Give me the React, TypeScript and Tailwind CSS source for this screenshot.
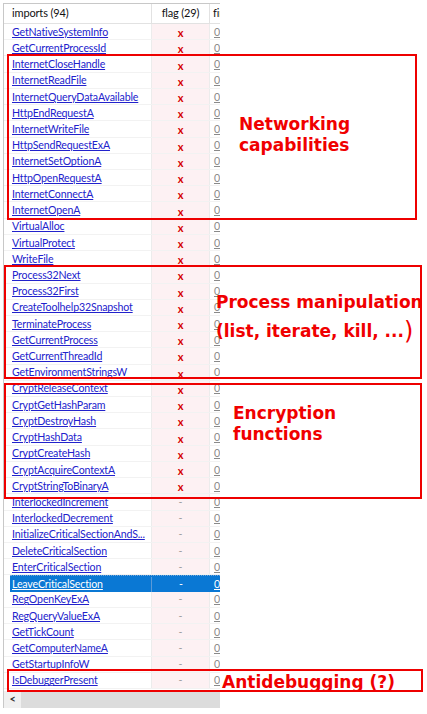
import React from "react";

type Row = { name: string; flag: boolean };

const rows: Row[] = [
  { name: "GetNativeSystemInfo", flag: true },
  { name: "GetCurrentProcessId", flag: true },
  { name: "InternetCloseHandle", flag: true },
  { name: "InternetReadFile", flag: true },
  { name: "InternetQueryDataAvailable", flag: true },
  { name: "HttpEndRequestA", flag: true },
  { name: "InternetWriteFile", flag: true },
  { name: "HttpSendRequestExA", flag: true },
  { name: "InternetSetOptionA", flag: true },
  { name: "HttpOpenRequestA", flag: true },
  { name: "InternetConnectA", flag: true },
  { name: "InternetOpenA", flag: true },
  { name: "VirtualAlloc", flag: true },
  { name: "VirtualProtect", flag: true },
  { name: "WriteFile", flag: true },
  { name: "Process32Next", flag: true },
  { name: "Process32First", flag: true },
  { name: "CreateToolhelp32Snapshot", flag: true },
  { name: "TerminateProcess", flag: true },
  { name: "GetCurrentProcess", flag: true },
  { name: "GetCurrentThreadId", flag: true },
  { name: "GetEnvironmentStringsW", flag: true },
  { name: "CryptReleaseContext", flag: true },
  { name: "CryptGetHashParam", flag: true },
  { name: "CryptDestroyHash", flag: true },
  { name: "CryptHashData", flag: true },
  { name: "CryptCreateHash", flag: true },
  { name: "CryptAcquireContextA", flag: true },
  { name: "CryptStringToBinaryA", flag: true },
  { name: "InterlockedIncrement", flag: false },
  { name: "InterlockedDecrement", flag: false },
  { name: "InitializeCriticalSectionAndS...", flag: false },
  { name: "DeleteCriticalSection", flag: false },
  { name: "EnterCriticalSection", flag: false },
  { name: "LeaveCriticalSection", flag: false },
  { name: "RegOpenKeyExA", flag: false },
  { name: "RegQueryValueExA", flag: false },
  { name: "GetTickCount", flag: false },
  { name: "GetComputerNameA", flag: false },
  { name: "GetStartupInfoW", flag: false },
  { name: "IsDebuggerPresent", flag: false },
];

const SELECTED = 34;

function ImportRow({ row, selected }: { row: Row; selected: boolean }) {
  if (selected) {
    return (
      <div className="flex h-[16.22px] items-center">
        <div className="w-[6px] h-full shrink-0" />
        <div className="flex h-full min-w-0 flex-1 items-center pt-[1px] bg-[#0a78d4] border-t border-dotted border-[#7aa8d8]">
          <div className="w-[142px] shrink-0 pl-[2px] whitespace-nowrap overflow-hidden text-white underline border-r border-[#5b9ad8]">
            {row.name}
          </div>
          <div className="w-[58px] shrink-0 text-center text-white">-</div>
          <div className="min-w-0 flex-1 overflow-hidden whitespace-nowrap pl-[4px] text-white underline">0x0000</div>
        </div>
      </div>
    );
  }
  return (
    <div className="flex h-[16.22px] items-center border-b border-[#f2f2f2]">
      <div className="w-[148px] shrink-0 h-full flex items-center pt-[2px] pl-[8px] whitespace-nowrap overflow-hidden text-[#2222cc] underline border-r border-[#ececec]">
        {row.name}
      </div>
      <div className="w-[58px] shrink-0 h-full flex items-center justify-center pt-[2px] bg-[#fdf1f3] border-r border-[#ececec]">
        {row.flag ? (
          <span className="text-[#d40000] font-bold text-[11px] leading-none">x</span>
        ) : (
          <span className="text-[#a0a0a0]">-</span>
        )}
      </div>
      <div className="min-w-0 flex-1 overflow-hidden whitespace-nowrap pt-[2px] pl-[4px] text-[#8a8a8a] underline">0x0000</div>
    </div>
  );
}

function Note({ className, children }: { className: string; children: React.ReactNode }) {
  return (
    <div
      className={`absolute text-[#f00000] font-bold text-[17px] tracking-normal whitespace-nowrap font-['DejaVu_Sans',sans-serif] ${className}`}
    >
      {children}
    </div>
  );
}

export default function App() {
  return (
    <div className="relative w-[427px] h-[714px] bg-white overflow-hidden font-['Lato','Liberation_Sans',sans-serif] text-[10.6px] tracking-[-0.15px]">
      <div className="ml-[3px] mt-[3px] w-[217px] overflow-hidden border-l border-t border-[#c8c8c8]">
        {/* header */}
        <div className="flex h-[20px] items-center border-b border-[#e2e2e2] text-[#111] text-[11px]">
          <div className="w-[148px] shrink-0 h-full flex items-center pl-[8px] border-r border-[#e2e2e2]">imports (94)</div>
          <div className="w-[58px] shrink-0 h-full flex items-center justify-center border-r border-[#e2e2e2]">flag (29)</div>
          <div className="min-w-0 flex-1 overflow-hidden whitespace-nowrap pl-[3px]">first-thunk</div>
        </div>
        {rows.map((r, i) => (
          <ImportRow key={r.name} row={r} selected={i === SELECTED} />
        ))}
        {/* horizontal scrollbar */}
        <div className="mt-[2px] flex h-[17px] items-center bg-[#e9e9e9]">
          <div className="w-[17px] shrink-0 h-full flex items-center justify-center bg-[#f0f0f0] text-[#333] text-[11px] font-bold">
            &lt;
          </div>
          <div className="flex-1 h-full bg-[#dcdcdc]" />
        </div>
      </div>

      {/* annotation boxes */}
      <div className="absolute left-[7px] top-[54px] w-[410px] h-[166px] border-2 border-[#ee0000]" />
      <div className="absolute left-[4px] top-[265px] w-[418px] h-[114px] border-2 border-[#ee0000]" />
      <div className="absolute left-[4px] top-[383px] w-[418px] h-[116px] border-2 border-[#ee0000]" />
      <div className="absolute left-[7px] top-[669px] w-[416px] h-[23px] border-2 border-[#ee0000]" />

      <Note className="left-[239px] top-[114px] leading-[21px]">
        Networking
        <br />
        capabilities
      </Note>
      <Note className="left-[216px] top-[288px] leading-[29px]">
        Process manipulation
        <br />
        (list, iterate, kill, ...<span className="text-[24px] font-normal align-[-2px]">)</span>
      </Note>
      <Note className="left-[233px] top-[403px] leading-[21px]">
        Encryption
        <br />
        functions
      </Note>
      <Note className="left-[222px] top-[671px] leading-[22px]">Antidebugging (?)</Note>
    </div>
  );
}
